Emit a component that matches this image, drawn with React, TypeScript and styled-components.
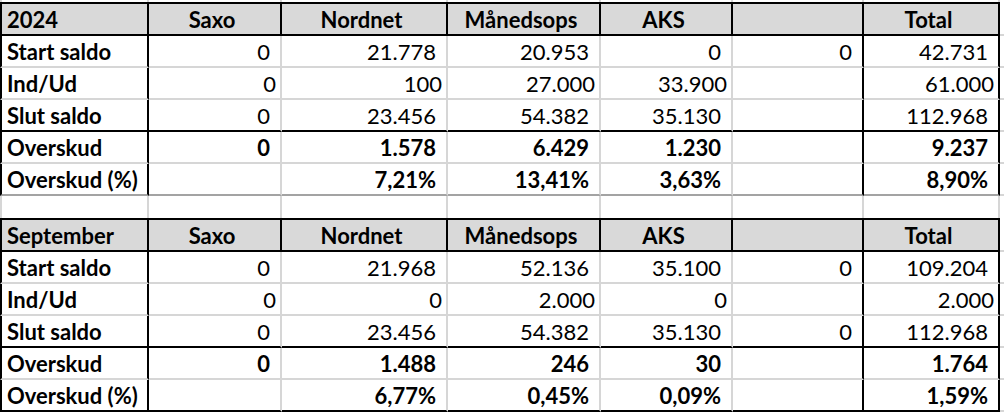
import React from "react";
import styled, { createGlobalStyle } from "styled-components";

const BLACK = "#000000";
const GRID = "#d6d6d6";
const SOFT = "#a3a3a3";
const HEAD_BG = "#d9d9d9";

type Line = string | undefined;

interface TableData {
  title: string;
  rows: { label: string; values: string[]; bold?: boolean; tight?: boolean }[];
  bottom: string;
}

const headers = ["Saxo", "Nordnet", "Månedsops", "AKS", "", "Total"];

const tables: TableData[] = [
  {
    title: "2024",
    bottom: SOFT,
    rows: [
      { label: "Start saldo", values: ["0", "21.778", "20.953", "0", "0", "42.731"] },
      { label: "Ind/Ud", values: ["0", "100", "27.000", "33.900", "", "61.000"], tight: true },
      { label: "Slut saldo", values: ["0", "23.456", "54.382", "35.130", "", "112.968"] },
      { label: "Overskud", values: ["0", "1.578", "6.429", "1.230", "", "9.237"], bold: true },
      { label: "Overskud (%)", values: ["", "7,21%", "13,41%", "3,63%", "", "8,90%"], bold: true },
    ],
  },
  {
    title: "September",
    bottom: BLACK,
    rows: [
      { label: "Start saldo", values: ["0", "21.968", "52.136", "35.100", "0", "109.204"] },
      { label: "Ind/Ud", values: ["0", "0", "2.000", "0", "", "2.000"], tight: true },
      { label: "Slut saldo", values: ["0", "23.456", "54.382", "35.130", "0", "112.968"] },
      { label: "Overskud", values: ["0", "1.488", "246", "30", "", "1.764"], bold: true },
      { label: "Overskud (%)", values: ["", "6,77%", "0,45%", "0,09%", "", "1,59%"], bold: true },
    ],
  },
];

const GlobalStyle = createGlobalStyle`
  html, body {
    margin: 0;
    padding: 0;
    background: #ffffff;
  }
  body {
    font-family: Lato, "Open Sans", "Liberation Sans", sans-serif;
    color: #000000;
  }
`;

const Sheet = styled.div`
  width: 1004px;
  height: 414px;
  overflow: hidden;
`;

const Row = styled.div`
  display: grid;
  grid-template-columns: 149px 133px 166px 153px 132px 131px 136px 1fr;
`;

const Cell = styled.div<{
  $h: number;
  $align?: "left" | "center" | "right";
  $bold?: boolean;
  $head?: boolean;
  $tight?: boolean;
  $l?: Line;
  $t?: Line;
  $r?: Line;
  $b?: Line;
}>`
  box-sizing: border-box;
  height: ${({ $h }) => $h}px;
  display: flex;
  align-items: flex-end;
  justify-content: ${({ $align }) =>
    $align === "center" ? "center" : $align === "right" ? "flex-end" : "flex-start"};
  padding: 0 ${({ $tight }) => ($tight ? 4 : 10)}px 1px 5px;
  font-size: 22px;
  line-height: 26px;
  font-weight: ${({ $bold }) => ($bold ? 700 : 400)};
  white-space: nowrap;
  background: ${({ $head }) => ($head ? HEAD_BG : "transparent")};
  border-left: ${({ $l }) => ($l ? `2px solid ${$l}` : "none")};
  border-top: ${({ $t }) => ($t ? `2px solid ${$t}` : "none")};
  border-right: ${({ $r }) => ($r ? `2px solid ${$r}` : "none")};
  border-bottom: ${({ $b }) => ($b ? `2px solid ${$b}` : "none")};
`;

// columns 0 (label), 5 (blank) and 6 (total) carry black lines in the body
const bodyRight = (i: number) => (i === 0 || i === 5 || i === 6 ? BLACK : GRID);

const GhostRow = ({ h }: { h: number }) => (
  <Row>
    {Array.from({ length: 7 }).map((_, i) => (
      <Cell key={i} $h={h} $l={i === 0 ? GRID : undefined} $r={GRID} />
    ))}
    <Cell $h={h} />
  </Row>
);

const Table = ({ data }: { data: TableData }) => (
  <>
    <Row>
      <Cell $h={34} $bold $head $l={BLACK} $t={BLACK} $r={BLACK} $b={BLACK}>
        {data.title}
      </Cell>
      {headers.map((h, i) => (
        <Cell key={i} $h={34} $bold $head $align="center" $t={BLACK} $r={BLACK} $b={BLACK}>
          {h}
        </Cell>
      ))}
      <Cell $h={34} $b={GRID} />
    </Row>
    {data.rows.map((row, ri) => {
      const last = ri === data.rows.length - 1;
      const bottom = last ? data.bottom : ri === 2 ? BLACK : GRID;
      return (
        <Row key={row.label}>
          <Cell $h={32} $bold $l={BLACK} $r={BLACK} $b={bottom}>
            {row.label}
          </Cell>
          {row.values.map((v, i) => (
            <Cell
              key={i}
              $h={32}
              $align="right"
              $bold={row.bold}
              $tight={row.tight}
              $r={bodyRight(i + 1)}
              $b={bottom}
            >
              {v}
            </Cell>
          ))}
          <Cell $h={32} $b={GRID} />
        </Row>
      );
    })}
  </>
);

const App = () => (
  <>
    <GlobalStyle />
    <Sheet>
      <GhostRow h={2} />
      <Table data={tables[0]} />
      <GhostRow h={22} />
      <Table data={tables[1]} />
    </Sheet>
  </>
);

export default App;
